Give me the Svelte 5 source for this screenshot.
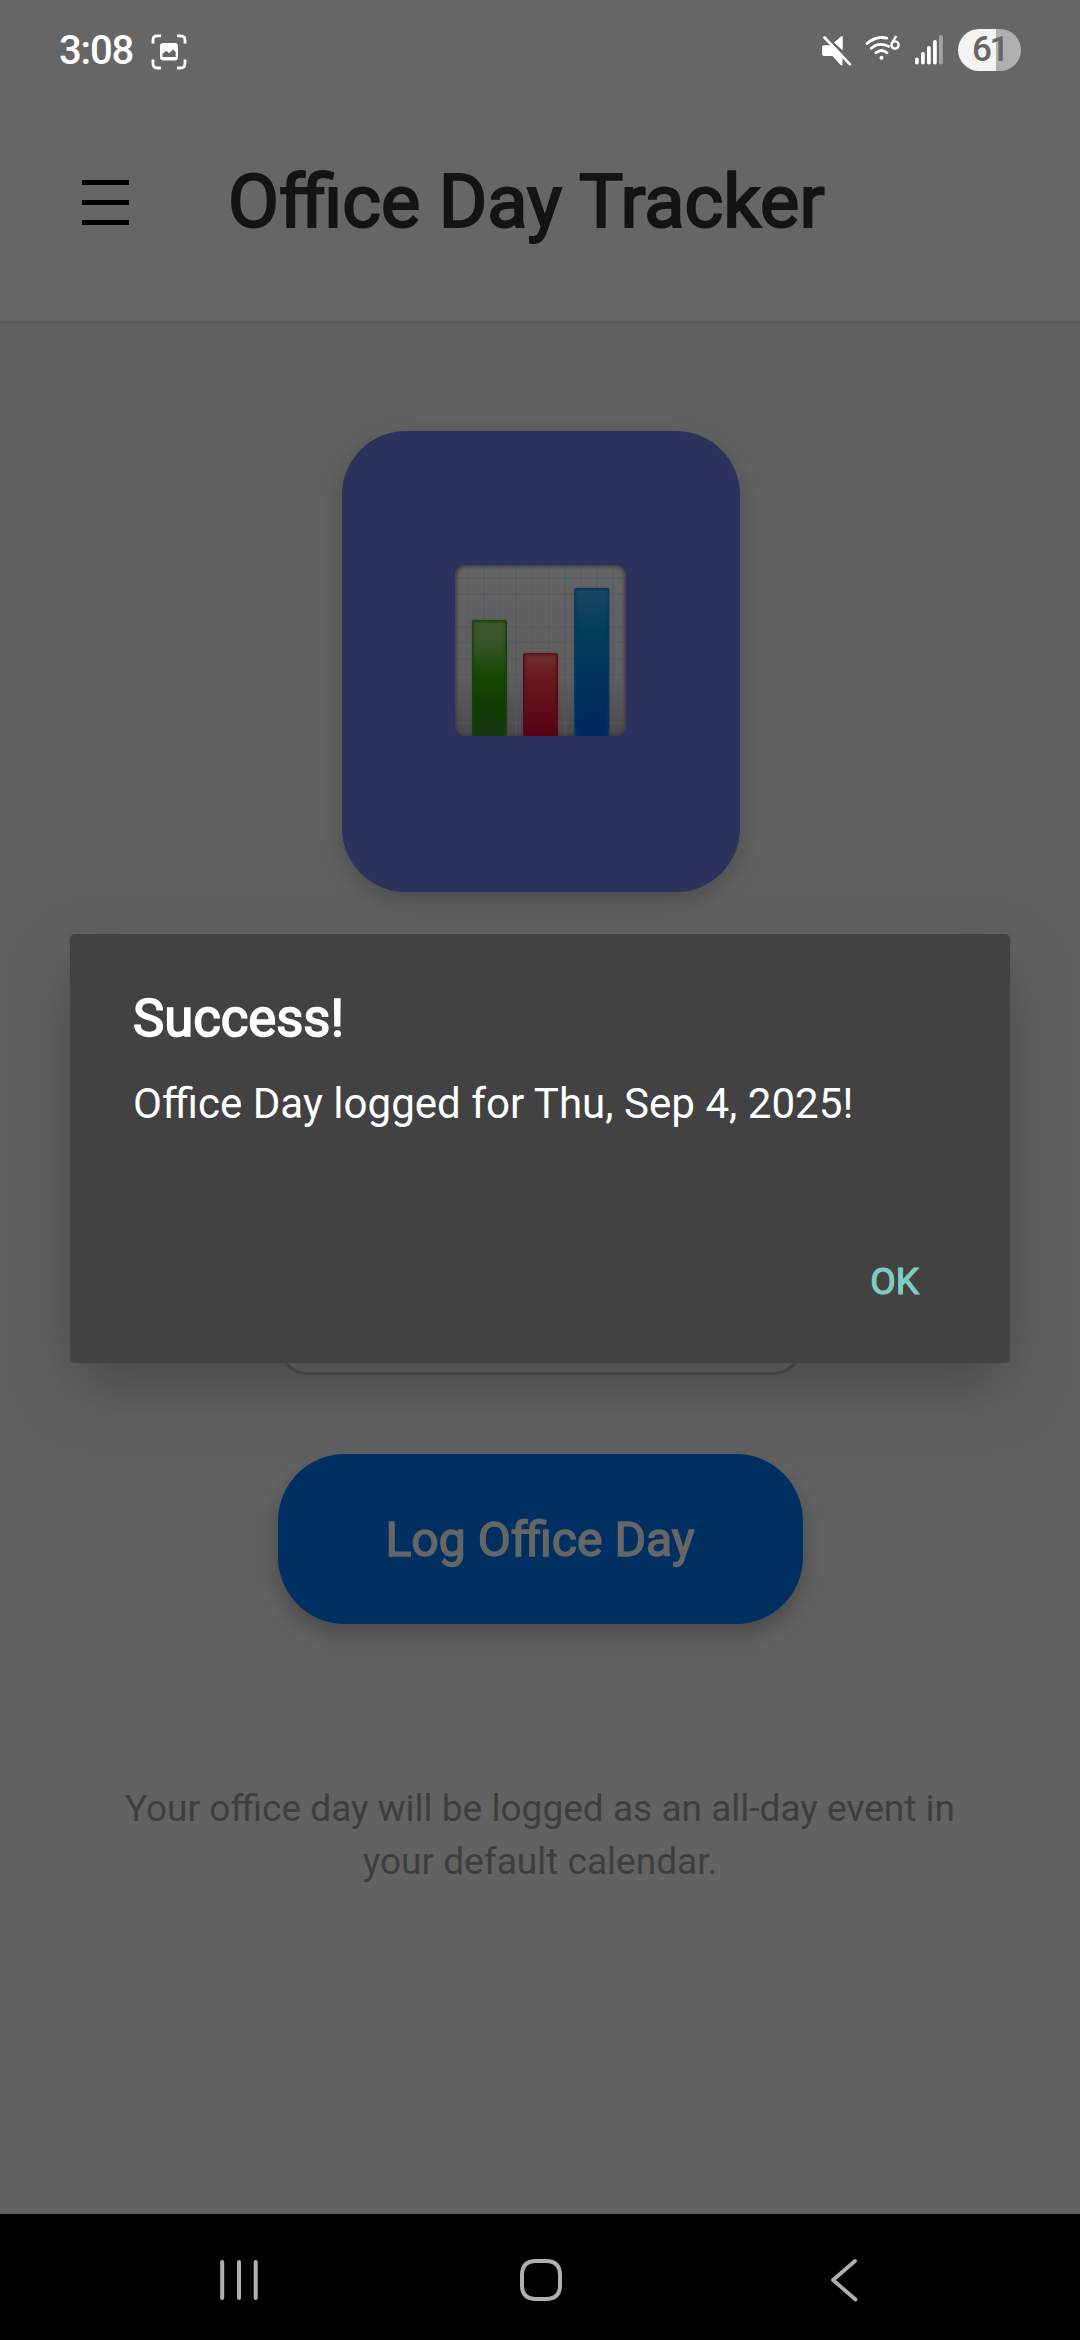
<script>
  const columns = [12.7, 28.7, 44.7, 61.3, 77.3, 93.7, 109.7, 126, 142, 158.3];
  const rows = [13.3, 29, 45.5, 62, 77, 94, 110, 126, 142, 158];
  const strong = [1, 3, 6, 8];
  const bars = [
    { x: 17, y: 55, fill: 'url(#green)', edge: '#124505' },
    { x: 68, y: 88, fill: 'url(#red)', edge: '#5c0815' },
    { x: 119.3, y: 23, fill: 'url(#blue)', edge: '#023866' }
  ];
</script>

<div class="screen">
  <div class="status">
    <div class="left">
      <span class="time">3:08</span>
      <svg width="36" height="36" viewBox="0 0 36 36" fill="none">
        <path d="M2 9.500V6Q2 1.800 6.200 1.800H10M26 1.800h3.500Q34 1.800 34 6v3.500M34 25.500v4Q34 34 29.500 34H26M10 34H6.200Q2 34 2 29.500v-4" stroke="#fff" stroke-width="2.800" />
        <rect x="9" y="9" width="18" height="17.500" rx="3.200" fill="#fff" />
        <path d="M11.500 23v-3.300l3.700-3 3 2.500 4-4 2.500 3V23z" fill="#666" />
      </svg>
    </div>
    <div class="right">
      <svg class="mute" width="31" height="31" viewBox="0 0 31 31">
        <path d="M3 10.200h6.500L21.500 22v8.500L19.500 30 11.500 21H3.200Q1 21 1 19v-6.800Q1 10.200 3 10.200zM13 7.500 20 1.400Q21.700.4 21.700 2.200V15.500z" fill="#fff" />
        <path d="M3.500 2.500 29 29.300" stroke="#fff" stroke-width="2.600" stroke-linecap="round" />
      </svg>
      <svg class="wifi" width="36" height="28" viewBox="0 0 36 28" fill="none">
        <g stroke="#fff" stroke-width="2.800" stroke-linecap="round">
          <path d="M2 9.500Q11.500 1.500 21.800 4.200" />
          <path d="M6.300 14.300Q13.500 7.600 23.500 12.300" />
          <path d="M11 18.800Q16.500 14.200 22 18.800" />
        </g>
        <circle cx="16.500" cy="23.800" r="2" fill="#fff" />
        <circle cx="30" cy="11" r="3.600" stroke="#fff" stroke-width="2.400" />
        <path d="M26.800 9.500 31.200 2" stroke="#fff" stroke-width="2.400" />
      </svg>
      <svg class="signal" width="28" height="30" viewBox="0 0 28 30" fill="#fff">
        <rect x="0" y="22.500" width="3.800" height="7" rx="1.800" />
        <rect x="6" y="17" width="3.800" height="12.500" rx="1.800" />
        <rect x="12" y="11" width="3.800" height="18.500" rx="1.800" />
        <rect x="18" y="5" width="3.800" height="24.500" rx="1.800" />
        <rect x="24" y="0" width="3.800" height="29.500" rx="1.800" fill="#a3a3a3" />
      </svg>
      <span class="battery">61</span>
    </div>
  </div>

  <header>
    <div class="burger"><i></i><i></i><i></i></div>
    <h1>Office Day Tracker</h1>
  </header>

  <main>
    <div class="card">
      <svg width="171" height="171" viewBox="0 0 171 171">
        <defs>
          <linearGradient id="paper" x1="0" y1="0" x2="0" y2="1">
            <stop offset="0" stop-color="#636363" /><stop offset=".65" stop-color="#5f5f5f" /><stop offset="1" stop-color="#4b484c" />
          </linearGradient>
          <linearGradient id="green" x1="0" y1="0" x2="0" y2="1">
            <stop offset="0" stop-color="#40572f" /><stop offset=".18" stop-color="#38552a" /><stop offset=".5" stop-color="#164700" /><stop offset=".7" stop-color="#123e04" /><stop offset="1" stop-color="#15350f" />
          </linearGradient>
          <linearGradient id="red" x1="0" y1="0" x2="0" y2="1">
            <stop offset="0" stop-color="#6e302e" /><stop offset=".3" stop-color="#69181f" /><stop offset=".6" stop-color="#61101a" /><stop offset="1" stop-color="#570016" />
          </linearGradient>
          <linearGradient id="blue" x1="0" y1="0" x2="0" y2="1">
            <stop offset="0" stop-color="#1c4664" /><stop offset=".3" stop-color="#003e5a" /><stop offset=".5" stop-color="#003759" /><stop offset="1" stop-color="#002760" />
          </linearGradient>
          <filter id="soft" x="-10%" y="-10%" width="120%" height="120%" color-interpolation-filters="sRGB"><feGaussianBlur stdDeviation="1.600" /></filter>
          <clipPath id="sheet"><rect width="171" height="171" rx="11" /></clipPath>
        </defs>
        <g clip-path="url(#sheet)">
          <rect width="171" height="171" fill="url(#paper)" />
          <g stroke="#535a63" stroke-width="1.300">
            {#each columns as x, i}
              <path d="M{x} 0V171" opacity={strong.includes(i) ? 0.85 : 0.4} />
            {/each}
            {#each rows as y, i}
              <path d="M0 {y}H171" opacity={i === 2 || i === 7 ? 0.2 : 0.6} />
            {/each}
          </g>
          <rect width="171" height="171" rx="11" fill="none" stroke="#3f3d40" stroke-width="3.500" filter="url(#soft)" />
          {#each bars as b}
            <rect x={b.x} y={b.y} width="35" height="160" fill="#333b40" opacity=".5" filter="url(#soft)" />
            <svg x={b.x} y={b.y} width="35" height={171 - b.y}>
              <rect width="35" height={171 - b.y} rx="3" fill={b.fill} />
              <rect x=".5" y=".8" width="34" height="190" rx="3" fill="none" stroke={b.edge} stroke-width="2.600" opacity=".8" filter="url(#soft)" />
              <path d="M.7 171V3.500Q.7.800 3.500.8H31.500Q34.300.8 34.300 3.500V171" fill="none" stroke={b.edge} stroke-width="1.400" opacity=".7" />
            </svg>
          {/each}
        </g>
      </svg>
    </div>
    <div class="picker"></div>
    <button class="log">Log Office Day</button>
    <p class="hint">Your office day will be logged as an all-day event in<br />your default calendar.</p>
  </main>

  <nav>
    <svg width="40" height="44" viewBox="0 0 40 44" stroke="#b0b0b0" stroke-width="4" stroke-linecap="round">
      <path d="M3.200 4V40M20 4V40M36.700 4V40" />
    </svg>
    <svg class="home" width="44" height="44" viewBox="0 0 44 44" fill="none" stroke="#b0b0b0" stroke-width="4">
      <path d="M17 3H27Q41 3 41 17V27Q41 41 27 41H17Q3 41 3 27V17Q3 3 17 3Z" />
    </svg>
    <svg width="30" height="46" viewBox="0 0 30 46" fill="none" stroke="#b0b0b0" stroke-width="3.800" stroke-linecap="round" stroke-linejoin="round">
      <path d="M26 4 4 23 26.500 42.500" />
    </svg>
  </nav>

  <div class="dialog" role="dialog">
    <h2>Success!</h2>
    <p>Office Day logged for Thu, Sep 4, 2025!</p>
    <div class="actions"><button>OK</button></div>
  </div>
</div>

<style>
  :global(body) { background: #626262; }
  * { box-sizing: border-box; }
  h1, h2, p { margin: 0; font-weight: 400; white-space: nowrap; }
  button { border: 0; padding: 0; background: none; font: inherit; }
  svg { display: block; flex: none; }
  .screen {
    position: relative;
    width: 1080px;
    height: 2340px;
    overflow: hidden;
    display: flex;
    flex-direction: column;
    background: #626262;
    font-family: Roboto, sans-serif;
  }
  .status {
    height: 100px;
    background: #666;
    display: flex;
    justify-content: space-between;
    padding: 0 59px 0 59px;
    color: #fff;
  }
  .left, .right { display: flex; align-items: center; height: 100px; }
  .time { font-size: 40px; font-weight: 500; line-height: 99px; width: 92px; letter-spacing: -1.200px; }
  .left svg { margin-top: 3px; }
  .mute { margin-right: 13px; }
  .wifi { margin-right: 14px; margin-top: -4px; }
  .signal { margin-right: 15px; }
  .battery {
    width: 63px;
    height: 42px;
    border-radius: 21px;
    background: linear-gradient(90deg, #f3f3f3 38px, #b0b0b0 38px);
    color: #666;
    font-size: 35px;
    font-weight: 500;
    line-height: 41px;
    letter-spacing: -2.300px;
    text-align: center;
  }
  header {
    height: 224px;
    background: #666;
    border-bottom: 3px solid #5a5a5a;
    display: flex;
    padding: 52px 0 0 82px;
  }
  .burger { width: 47px; padding-top: 28px; display: flex; flex-direction: column; gap: 15px; }
  .burger i { display: block; height: 5px; background: #000; }
  h1 {
    margin-left: 98px;
    padding-left: 1px;
    font-size: 74.100px;
    line-height: 100px;
    color: #141414;
    -webkit-text-stroke: 2.200px #141414;
  }
  main { height: 1890px; display: flex; flex-direction: column; align-items: center; padding-top: 107px; }
  .card {
    width: 398px;
    height: 461px;
    border-radius: 64px;
    background: #2b325c;
    margin-left: 2px;
    padding: 134px 0 0 113px;
    box-shadow: 0 8px 26px rgba(0, 0, 0, 0.22);
  }
  .picker {
    width: 525px;
    height: 135px;
    margin-top: 348px;
    border: 3px solid #525252;
    border-radius: 30px;
    background: #666;
  }
  .log {
    margin-top: 79px;
    width: 525px;
    height: 170px;
    border-radius: 67px;
    background: #003062;
    color: #666;
    font-size: 48.100px;
    line-height: 171px;
    -webkit-text-stroke: 1.500px #666;
    box-shadow: 0 10px 22px rgba(0, 0, 0, 0.26);
  }
  .hint { margin-top: 158px; font-size: 37.050px; line-height: 53.300px; color: #3e3e3e; text-align: center; }
  nav {
    height: 126px;
    background: #000;
    display: flex;
    align-items: center;
    justify-content: space-between;
    padding: 6px 221px 0 219px;
  }
  .home { margin-right: 6px; }
  .dialog {
    position: absolute;
    left: 70px;
    top: 934px;
    width: 940px;
    height: 429px;
    border-radius: 5px;
    background: #424242;
    color: #fff;
    padding: 52px 63px;
    box-shadow: 0 26px 66px rgba(0, 0, 0, 0.25);
  }
  h2 { font-size: 52.600px; line-height: 64px; -webkit-text-stroke: 1.700px #fff; }
  .dialog p { margin-top: 29px; font-size: 42.100px; line-height: 50px; }
  .actions { display: flex; justify-content: flex-end; padding: 123px 28px 0 0; }
  .actions button { color: #80cbc4; font-size: 37px; line-height: 60px; -webkit-text-stroke: 1.200px #80cbc4; }
</style>
